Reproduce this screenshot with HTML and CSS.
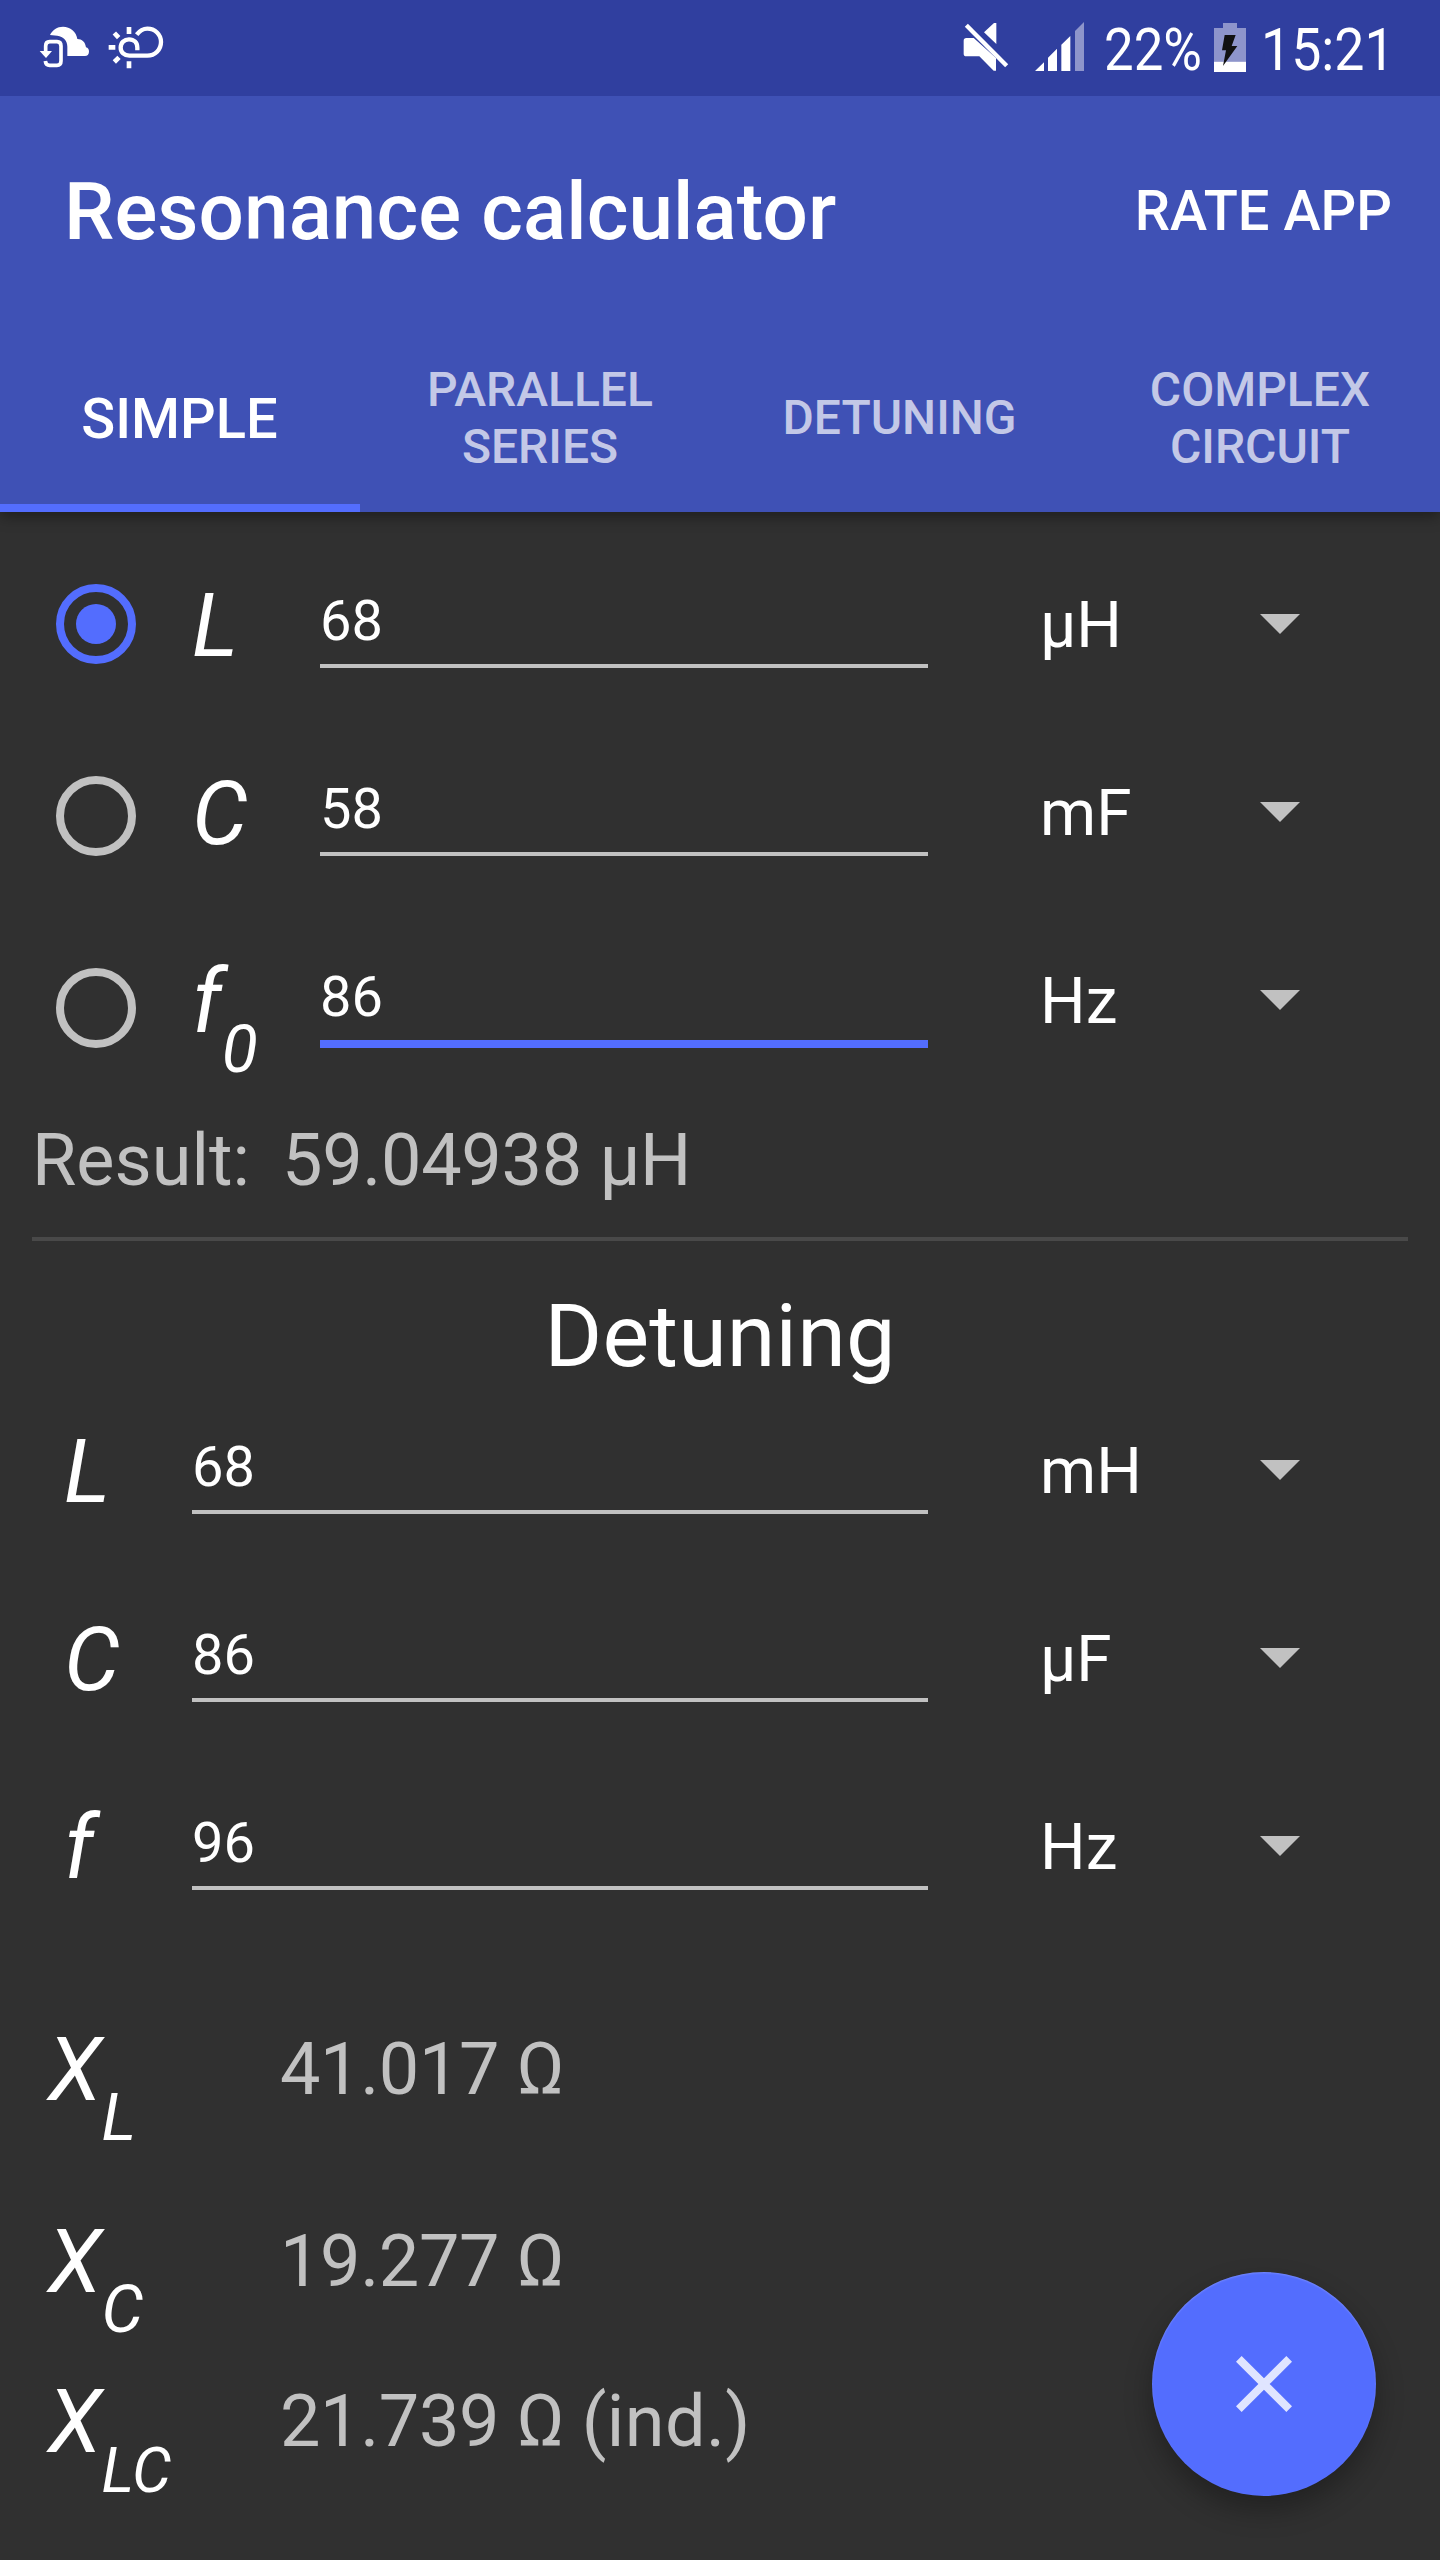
FILE: index.html
```html
<!DOCTYPE html>
<html lang="en">
<head>
<meta charset="utf-8">
<title>Resonance calculator</title>
<link rel="stylesheet" href="styles.css">
</head>
<body>
<div class="screen">
  <div class="status">
    <div class="status-group">
      <svg class="ic-cloud" viewBox="114 75 156 135" width="52" height="45">
        <path fill="#fff" d="M150 105C157 90 172 80 189 80c22 0 40 15 43 37 14 0 24 9 26 25 6 1 9 6 9 13 0 8-5 13-12 13h-53v-28c0-18-12-31-30-33z"/>
        <path fill="none" stroke="#fff" stroke-width="11" d="M137 153v-15c0-9 4-13 12-13h22c8 0 12 4 12 13v45c0 9-4 13-12 13h-22c-8 0-12-3-13-13"/>
        <path fill="#fff" d="M119 153h37l-18 21z"/>
      </svg>
      <svg class="ic-weather" viewBox="321 75 174 135" width="58" height="45">
        <path fill="none" stroke="#fff" stroke-width="13" d="M410 104C420 91 431 86 442 86c23 0 41 17 41 40s-18 41-41 41h-54c-15 0-26-10-26-24 0-15 11-25 25-25 15 0 25 10 25 25v8"/>
        <path fill="none" stroke="#fff" stroke-width="14" d="M387 81v21M387 184v21M326 142h20M343 99l13 14M343 186l14-14"/>
      </svg>
    </div>
    <div class="status-group">
      <svg class="ic-mute" viewBox="69 66 141 150" width="47" height="50">
        <path fill="#fff" d="M79 114h22l67 60v38h-7l-43-43H79q-8 0-8-8v-39q0-8 8-8zM132 97l30-28h7v63z"/>
        <path stroke="#303f9f" stroke-width="8" d="M90 69l120 118"/>
        <path stroke="#fff" stroke-width="13" d="M79 76l121 121"/>
      </svg>
      <svg class="ic-signal" viewBox="285 66 150 147" width="50" height="49">
        <path fill="#fff" d="M285 213l27-26v26zM324 173l27-27v67h-27zM364 134l27-26v105h-27z"/>
        <path fill="#8e95cb" d="M405 93l27-27v147h-27z"/>
      </svg>
      <span class="status-text percent">22%</span>
      <svg class="ic-battery" viewBox="822 69 96 147" width="32" height="49">
        <path fill="#8e95cb" d="M849 69h42v15h27v101h-96V84h27z"/>
        <path fill="#fff" d="M822 185h96v31h-96z"/>
        <path fill="#111" d="M854 105h33l-12 33h17l-43 60 9-47h-12z"/>
      </svg>
      <span class="status-text clock">15:21</span>
    </div>
  </div>

  <header class="appbar">
    <div class="toolbar">
      <h1 class="title">Resonance calculator</h1>
      <span class="action">RATE APP</span>
    </div>
    <nav class="tabs">
      <div class="tab active">SIMPLE</div>
      <div class="tab">PARALLEL<br>SERIES</div>
      <div class="tab single">DETUNING</div>
      <div class="tab">COMPLEX<br>CIRCUIT</div>
    </nav>
  </header>

  <main class="content">
    <section class="resonance">
      <div class="radios">
        <span class="radio checked"></span>
        <span class="radio"></span>
        <span class="radio"></span>
      </div>
      <div class="rows">
        <div class="row">
          <span class="symbol">L</span><span class="field">68</span><span class="unit">µH</span><span class="arrow"></span>
        </div>
        <div class="row">
          <span class="symbol">C</span><span class="field">58</span><span class="unit">mF</span><span class="arrow"></span>
        </div>
        <div class="row">
          <span class="symbol">f<sub>0</sub></span><span class="field focused">86</span><span class="unit">Hz</span><span class="arrow"></span>
        </div>
      </div>
    </section>

    <div class="result"><span class="result-label">Result:</span><span class="result-value">59.04938 µH</span></div>
    <div class="divider"></div>
    <h2 class="heading">Detuning</h2>

    <section class="rows detuning">
      <div class="row">
        <span class="symbol">L</span><span class="field">68</span><span class="unit">mH</span><span class="arrow"></span>
      </div>
      <div class="row">
        <span class="symbol">C</span><span class="field">86</span><span class="unit">µF</span><span class="arrow"></span>
      </div>
      <div class="row">
        <span class="symbol">f</span><span class="field">96</span><span class="unit">Hz</span><span class="arrow"></span>
      </div>
    </section>

    <section class="reactances">
      <div class="reactance"><span class="symbol">X<sub>L</sub></span><span class="value">41.017 Ω</span></div>
      <div class="reactance"><span class="symbol">X<sub>C</sub></span><span class="value">19.277 Ω</span></div>
      <div class="reactance last"><span class="symbol">X<sub class="small">LC</sub></span><span class="value">21.739 Ω <span class="kind">(ind.)</span></span></div>
    </section>
  </main>

  <button class="fab" aria-label="Clear">
    <svg viewBox="0 0 24 24" width="96" height="96"><path fill="#fff" fill-opacity=".82" d="M19 6.41L17.59 5 12 10.59 6.41 5 5 6.41 10.59 12 5 17.59 6.41 19 12 13.41 17.59 19 19 17.59 13.41 12z"/></svg>
  </button>
</div>
</body>
</html>
```
FILE: styles.css
```css
* { box-sizing: border-box; }

body {
  margin: 0;
  background: #303030;
  color: #fff;
  font-family: Roboto, "Liberation Sans", sans-serif;
}

.screen {
  position: relative;
  width: 1440px;
  height: 2560px;
  overflow: hidden;
}

/* Status bar */
.status {
  display: flex;
  justify-content: space-between;
  height: 96px;
  padding: 0 50px 0 38px;
  background: #303f9f;
}
.status-group { display: flex; align-items: flex-start; }
.ic-cloud { margin-top: 25px; }
.ic-weather { margin: 25px 0 0 17px; }
.ic-mute { margin-top: 22px; }
.ic-signal { margin: 22px 0 0 25px; }
.ic-battery { margin: 23px 0 0 11px; }
.status-text {
  margin-top: 14px;
  font-size: 60px;
  line-height: 71px;
  white-space: nowrap;
  transform: scaleX(.88);
  transform-origin: 0 0;
}
.percent { width: 99px; margin-left: 19px; }
.clock { width: 129px; margin-left: 15px; transform: scaleX(.895); }

/* App bar */
.appbar {
  position: relative;
  height: 416px;
  background: #3f51b5;
  box-shadow: 0 4px 14px rgba(0, 0, 0, .4);
  clip-path: inset(0 0 -40px 0);
}
.toolbar {
  display: flex;
  justify-content: space-between;
  align-items: center;
  height: 224px;
  padding: 8px 48px 0 64px;
}
.title {
  margin: 0;
  font-size: 80px;
  line-height: 94px;
  font-weight: 500;
  letter-spacing: .07px;
}
.action {
  margin-bottom: 2px;
  font-size: 56px;
  font-weight: 500;
}
.tabs { display: grid; grid-template-columns: repeat(4, 1fr); height: 192px; }
.tab {
  display: flex;
  align-items: center;
  justify-content: center;
  padding-top: 4px;
  color: rgba(255, 255, 255, .7);
  font-size: 48px;
  line-height: 57px;
  font-weight: 500;
  text-align: center;
}
.tab.single { padding: 2px 1px 0 0; }
.tab.active {
  padding: 14px 1px 0 0;
  border-bottom: 8px solid #536dfe;
  color: #fff;
  font-size: 56px;
}

/* Form rows */
.content { padding-top: 64px; }
.resonance { display: flex; }
.radios {
  display: flex;
  flex-direction: column;
  gap: 112px;
  width: 192px;
  padding: 8px 0 0 56px;
}
.radio {
  display: grid;
  place-items: center;
  width: 80px;
  height: 80px;
  border: 8px solid #c1c1c1;
  border-radius: 50%;
}
.radio.checked { border-color: #536dfe; }
.radio.checked::after {
  content: "";
  width: 40px;
  height: 40px;
  border-radius: 50%;
  background: #536dfe;
}
.rows { display: flex; flex-direction: column; gap: 88px; }
.resonance .rows { height: 476px; }
.row {
  display: grid;
  grid-template-columns: 128px 608px 332px 40px;
  align-items: start;
  height: 100px;
}
.symbol {
  font-size: 88px;
  line-height: 100px;
  font-style: italic;
  white-space: nowrap;
}
.symbol sub {
  font-size: 66px;
  line-height: 0;
  vertical-align: -40px;
}
.symbol sub.small { font-size: 62px; }
.field {
  height: 80px;
  margin-top: 12px;
  border-bottom: 4px solid #c1c1c1;
  font-size: 56px;
  line-height: 66px;
}
.field.focused { height: 84px; border-bottom: 8px solid #536dfe; }
.unit {
  margin-top: 12px;
  padding-left: 112px;
  font-size: 64px;
  line-height: 76px;
}
.arrow {
  width: 40px;
  height: 20px;
  margin-top: 38px;
  background: #c1c1c1;
  clip-path: polygon(0 0, 100% 0, 50% 100%);
}

.result {
  display: flex;
  margin-top: 67px;
  padding-left: 32px;
  color: #c1c1c1;
  font-size: 72px;
  line-height: 84px;
}
.result-label { width: 250px; }
.result-value { letter-spacing: -.3px; }
.divider { height: 4px; margin: 34px 32px 0; background: #494949; }
.heading {
  margin: 43px 0 34px;
  font-size: 88px;
  line-height: 104px;
  font-weight: 400;
  letter-spacing: .15px;
  text-align: center;
}
.detuning { padding-left: 64px; }
.detuning .row { grid-template-columns: 128px 736px 332px 40px; }

/* Reactances */
.reactances { margin-top: 122px; padding-left: 48px; }
.reactance {
  display: grid;
  grid-template-columns: 232px auto;
  align-items: start;
  height: 100px;
  margin-bottom: 92px;
}
.reactance.last { margin-top: -32px; margin-bottom: 0; }
.value {
  margin-top: 8px;
  color: #c1c1c1;
  font-size: 72px;
  line-height: 84px;
  letter-spacing: -.35px;
}
.kind { letter-spacing: .4px; }

.fab {
  position: absolute;
  right: 64px;
  bottom: 64px;
  display: grid;
  place-items: center;
  width: 224px;
  height: 224px;
  padding: 0;
  border: 0;
  border-radius: 50%;
  background: #536dfe;
  box-shadow: 0 14px 28px rgba(0, 0, 0, .3), inset 0 1px 2px rgba(255, 255, 255, .2);
}
```
